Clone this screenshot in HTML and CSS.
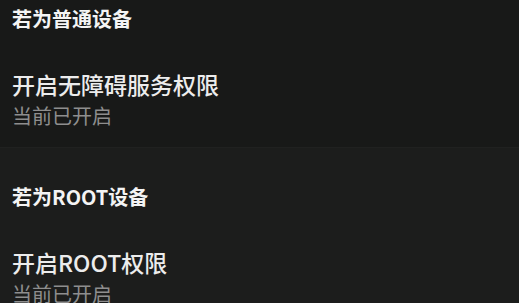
FILE: index.html
```html
<!DOCTYPE html>
<html lang="zh-CN">
<head>
<meta charset="utf-8">
<link rel="stylesheet" href="styles.css">
</head>
<body>
<section class="group group-first">
  <div class="heading">若为普通设备</div>
  <div class="item">
    <div class="title">开启无障碍服务权限</div>
    <div class="sub">当前已开启</div>
  </div>
</section>
<section class="group group-second">
  <div class="heading">若为ROOT设备</div>
  <div class="item">
    <div class="title">开启ROOT权限</div>
    <div class="sub">当前已开启</div>
  </div>
</section>
</body>
</html>
```
FILE: styles.css
```css
html, body {
  margin: 0;
  padding: 0;
  background: #1c1d1c;
  font-family: "Noto Sans CJK SC", "Noto Sans", sans-serif;
}
.group {
  padding: 4px 12px 20px;
}
.group-first {
  background: #181918;
  height: 148px;
  box-sizing: border-box;
  border-bottom: 1px solid #202120;
}
.group-second {
  padding-top: 34px;
}
.heading {
  font-size: 20px;
  line-height: 29px;
  font-weight: 700;
  color: #f4f4f4;
}
.item {
  margin-top: 33.5px;
}
.title {
  font-size: 23px;
  line-height: 34px;
  font-weight: 500;
  color: #ececec;
}
.sub {
  font-size: 20px;
  line-height: 29px;
  color: #8e8e8e;
}
```
